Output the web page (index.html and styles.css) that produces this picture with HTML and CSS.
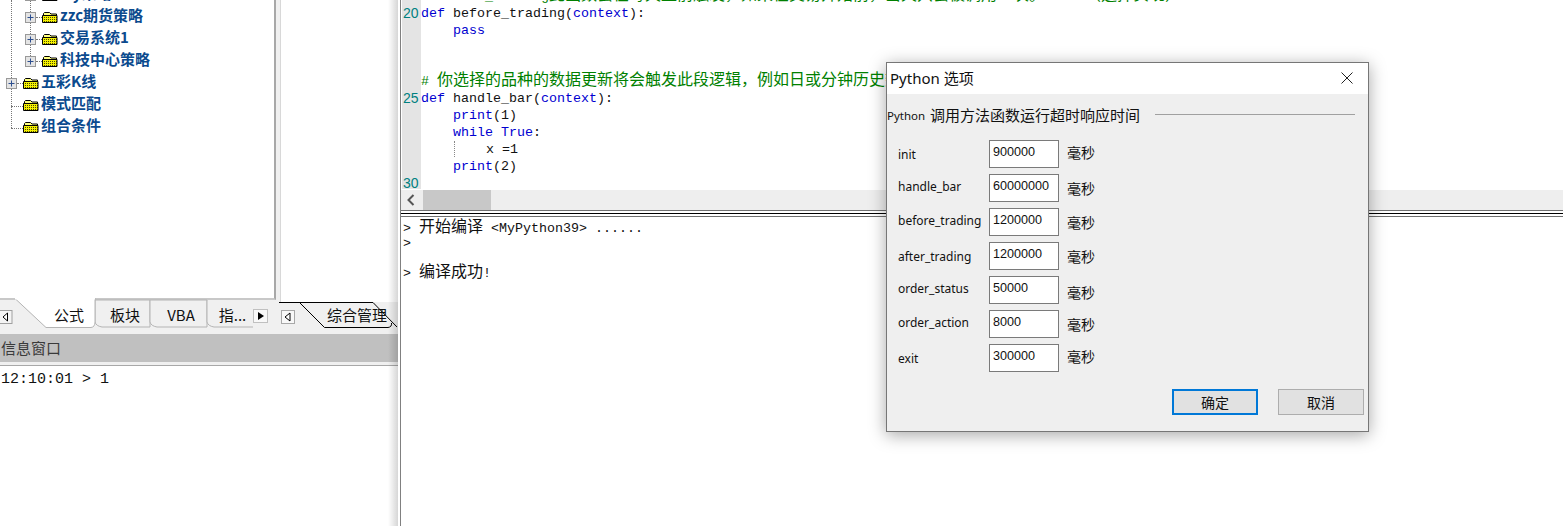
FILE: index.html
```html
<!DOCTYPE html>
<html lang="zh">
<head>
<meta charset="utf-8">
<title>Python 选项</title>
<link rel="stylesheet" href="styles.css">
</head>
<body>
<svg class="defs" width="0" height="0" aria-hidden="true">
  <defs>
    <pattern id="dither" width="2" height="2" patternUnits="userSpaceOnUse">
      <rect width="2" height="2" fill="#f4f000"/>
      <rect width="1" height="1" fill="#4a4a00"/>
    </pattern>
    <symbol id="folder" viewBox="0 0 16 12">
      <path d="M1.5 11.5V2.5L2.5 1.5H7.5L9 3H14.5V11.5Z" fill="#ffff80" stroke="#000"/>
      <rect x="1" y="5" width="14" height="6" fill="url(#dither)"/>
      <path d="M.5 11.5H15V4.5H.5Z" fill="none" stroke="#000"/>
    </symbol>
    <symbol id="plus" viewBox="0 0 11 11">
      <rect x=".5" y=".5" width="10" height="10" fill="#e4e4e4" stroke="#999"/>
      <path d="M2.5 5.5H8.5M5.5 2.5V8.5" stroke="#2d4f8f" fill="none"/>
    </symbol>
  </defs>
</svg>
<div class="app">
  <div class="left">
    <div class="panes">
      <div class="tree">
        <div class="vline-1"></div>
        <div class="vline-2"></div>
        <div class="node lvl2 node-first"><svg class="plus"><use href="#plus"/></svg><span class="dash"></span><svg class="folder"><use href="#folder"/></svg><span class="node-text">My策略</span></div>
        <div class="node lvl2"><svg class="plus"><use href="#plus"/></svg><span class="dash"></span><svg class="folder"><use href="#folder"/></svg><span class="node-text">zzc期货策略</span></div>
        <div class="node lvl2"><svg class="plus"><use href="#plus"/></svg><span class="dash"></span><svg class="folder"><use href="#folder"/></svg><span class="node-text">交易系统1</span></div>
        <div class="node lvl2"><svg class="plus"><use href="#plus"/></svg><span class="dash"></span><svg class="folder"><use href="#folder"/></svg><span class="node-text">科技中心策略</span></div>
        <div class="node lvl1"><svg class="plus"><use href="#plus"/></svg><span class="dash"></span><svg class="folder"><use href="#folder"/></svg><span class="node-text">五彩K线</span></div>
        <div class="node lvl1 leaf"><span class="dash"></span><svg class="folder"><use href="#folder"/></svg><span class="node-text">模式匹配</span></div>
        <div class="node lvl1 leaf"><span class="dash"></span><svg class="folder"><use href="#folder"/></svg><span class="node-text">组合条件</span></div>
      </div>
      <div class="pane2"></div>
    </div>
    <div class="tabstrip">
      <svg class="tabshapes" viewBox="0 298 398 36" width="398" height="36">
        <path d="M95 300V322Q96 326 102 327H150V300Z" fill="#f0f0f0" stroke="#b4b4b4"/>
        <path d="M150 300V322Q151 326 157 327H207V300Z" fill="#f0f0f0" stroke="#b4b4b4"/>
        <path d="M207 300V322Q208 326 214 327H253" fill="#f0f0f0" stroke="#b4b4b4"/>
        <path d="M15 298.5L46 327.5H91Q95 327 95 322V298" fill="#fff" stroke="#b4b4b4"/>
        <path d="M15 298.5H95" stroke="#fff" stroke-width="2" fill="none"/>
        <path d="M0 299.5H15" stroke="#c8c8c8" fill="none"/>
        <rect x="-1" y="310.5" width="13" height="13" fill="#f4f4f4" stroke="#a0a0a0"/>
        <path d="M7.5 313V321L3 317Z" fill="#fff" stroke="#000"/>
        <rect x="253.5" y="309.5" width="14" height="13" fill="#f8f8f8" stroke="#c0c0c0"/>
        <path d="M258 312V320L264 316Z" fill="#000"/>
        <rect x="281.5" y="310.5" width="13" height="13" fill="#f8f8f8" stroke="#a8a8a8"/>
        <path d="M290 313V321L285 317Z" fill="#fff" stroke="#000"/>
        <path d="M299.5 302.5L324.5 327.5H388Q392 327 391.5 323L373 302.5Z" fill="#f0f0f0"/>
        <path d="M279 302.5H373M299.5 302.5L324.5 327.5H388Q392 327 391.5 323M373 302.5L397 327" fill="none" stroke="#000"/>
      </svg>
      <span class="tab tab-on">公式</span>
      <span class="tab tab-a">板块</span>
      <span class="tab tab-b">VBA</span>
      <span class="tab tab-c">指...</span>
      <span class="tab tab-d">综合管理</span>
    </div>
    <div class="info-head">信息窗口</div>
    <div class="info-body">12:10:01 &gt; 1</div>
  </div>
  <div class="right">
    <div class="editor">
      <div class="gutter">
        <div class="ln"></div>
        <div class="ln">20</div>
        <div class="ln"></div>
        <div class="ln"></div>
        <div class="ln"></div>
        <div class="ln"></div>
        <div class="ln">25</div>
        <div class="ln"></div>
        <div class="ln"></div>
        <div class="ln"></div>
        <div class="ln"></div>
        <div class="ln">30</div>
      </div>
      <div class="code">
        <div class="cl cm"># before_trading<span class="zh">此函数会在每天盘前触发，如果在交易开始前，当天只会被调用一次。</span> --  <span class="zh">（选择实现）</span></div>
        <div class="cl"><span class="kw">def</span> before_trading(<span class="kw">context</span>):</div>
        <div class="cl">    <span class="kw">pass</span></div>
        <div class="cl"></div>
        <div class="cl"></div>
        <div class="cl cm"># <span class="zh">你选择的品种的数据更新将会触发此段逻辑，例如日或分钟历史数据切片或者是实时数据切片更新</span></div>
        <div class="cl"><span class="kw">def</span> handle_bar(<span class="kw">context</span>):</div>
        <div class="cl">    <span class="kw">print</span>(1)</div>
        <div class="cl">    <span class="kw">while True</span>:</div>
        <div class="cl">    <span class="guide"></span>    x =1</div>
        <div class="cl">    <span class="kw">print</span>(2)</div>
        <div class="cl"></div>
      </div>
    </div>
    <div class="hscroll">
      <svg class="hs-arrow" viewBox="0 0 8 12" width="8" height="12"><path d="M6.5 1L1.5 6L6.5 11" fill="none" stroke="#555" stroke-width="2"/></svg>
      <div class="hs-thumb"></div>
    </div>
    <div class="sash"></div>
    <div class="output">
      <div class="ol">&gt; <span class="zh">开始编译</span> &lt;MyPython39&gt; ......</div>
      <div class="ol">&gt;</div>
      <div class="ol"></div>
      <div class="ol">&gt; <span class="zh">编译成功</span>!</div>
    </div>
  </div>
  <div class="dialog">
    <div class="dlg-title">
      <span>Python 选项</span>
      <svg class="dlg-close" viewBox="0 0 12 12" width="12" height="12"><path d="M.5 .5L11.5 11.5M11.5 .5L.5 11.5" stroke="#222" fill="none"/></svg>
    </div>
    <div class="dlg-body">
      <div class="group">
        <span class="group-py">Python</span><span class="group-zh">调用方法函数运行超时响应时间</span><span class="group-line"></span>
      </div>
      <div class="rows">
        <div class="row"><span class="lab lab-low">init</span><div class="field">900000</div><span class="unit unit-hi">毫秒</span></div>
        <div class="row"><span class="lab">handle_bar</span><div class="field">60000000</div><span class="unit">毫秒</span></div>
        <div class="row"><span class="lab">before_trading</span><div class="field">1200000</div><span class="unit">毫秒</span></div>
        <div class="row"><span class="lab lab-low">after_trading</span><div class="field">1200000</div><span class="unit">毫秒</span></div>
        <div class="row"><span class="lab">order_status</span><div class="field">50000</div><span class="unit unit-lo">毫秒</span></div>
        <div class="row"><span class="lab">order_action</span><div class="field">8000</div><span class="unit">毫秒</span></div>
        <div class="row"><span class="lab lab-low">exit</span><div class="field">300000</div><span class="unit unit-hi">毫秒</span></div>
      </div>
      <div class="buttons">
        <div class="btn btn-default">确定</div>
        <div class="btn">取消</div>
      </div>
    </div>
  </div>
</div>
</body>
</html>
```
FILE: styles.css
```css
* { box-sizing: border-box; }
html, body { margin: 0; padding: 0; background: #fff; }
body { width: 1563px; height: 526px; overflow: hidden; }
.defs { position: absolute; }
.zh { font-family: "Noto Sans CJK SC", sans-serif; font-size: 16px; line-height: 0; }

.app {
  position: relative;
  display: flex;
  width: 1563px;
  height: 526px;
  overflow: hidden;
  background: #fff;
}

/* Left column */
.left {
  position: relative;
  display: flex;
  flex-direction: column;
  flex: none;
  width: 398px;
  background: #f0f0f0;
}
.left::after {
  content: "";
  position: absolute;
  top: 0;
  right: 0;
  bottom: 0;
  width: 10px;
  background: linear-gradient(to right, rgba(0,0,0,0), rgba(0,0,0,.16));
}
.panes { display: flex; align-items: flex-start; height: 302px; flex: none; }
.tree {
  position: relative;
  flex: none;
  width: 276px;
  height: 300px;
  background: #fff;
  border-right: 2px solid #a8a8a8;
  border-bottom: 2px solid #c8c8c8;
  overflow: hidden;
  font-family: "Noto Sans CJK SC", sans-serif;
}
.vline-1 {
  position: absolute;
  left: 11px;
  top: 0;
  height: 128px;
  border-left: 1px dotted #777;
}
.vline-2 {
  position: absolute;
  left: 30px;
  top: 0;
  height: 60px;
  border-left: 1px dotted #777;
}
.node {
  position: relative;
  display: flex;
  align-items: center;
  height: 22px;
}
.node-first { margin-top: -17px; }
.lvl1 { padding-left: 6px; }
.lvl2 { padding-left: 25px; }
.leaf { padding-left: 11px; }
.plus { flex: none; width: 11px; height: 11px; margin-top: 2px; }
.dash {
  flex: none;
  width: 6px;
  height: 1px;
  margin-top: 2px;
  border-top: 1px dotted #777;
}
.leaf .dash { width: 12px; margin-top: 4px; }
.folder { flex: none; width: 16px; height: 12px; margin-top: 2px; }
.node-text {
  margin-left: 2px;
  margin-top: -2px;
  font-size: 15px;
  font-weight: 700;
  line-height: 22px;
  color: #0b4a8e;
  white-space: nowrap;
}
.pane2 {
  flex: none;
  align-self: stretch;
  width: 118px;
  margin-left: 4px;
  background: #fff;
  border-left: 1px solid #d8d8d8;
}

.tabstrip {
  position: relative;
  display: flex;
  align-items: flex-start;
  flex: none;
  height: 32px;
  padding-top: 3px;
  font-family: "Noto Sans CJK SC", sans-serif;
  font-size: 15px;
  line-height: 20px;
  color: #111;
}
.tabshapes { position: absolute; left: 0; top: -4px; overflow: visible; }
.tab { position: relative; white-space: nowrap; text-align: center; }
.tab-on { margin-left: 45px; width: 48px; }
.tab-a { margin-left: 2px; width: 55px; padding-left: 5px; }
.tab-b { width: 57px; padding-left: 5px; }
.tab-c { width: 46px; padding-left: 5px; }
.tab-d { margin-left: 74px; }

.info-head {
  flex: none;
  height: 28px;
  padding-left: 1px;
  background: #c0c0c0;
  font-family: "Noto Sans CJK SC", sans-serif;
  font-size: 15px;
  line-height: 28px;
  color: #3a3a3a;
}
.info-body {
  flex: 1;
  margin-top: 3px;
  padding: 4px 0 0 1px;
  background: #fff;
  border-top: 1px solid #a8a8a8;
  font-family: "Liberation Mono", monospace;
  font-size: 15px;
  line-height: 20px;
  color: #111;
  white-space: pre;
}

/* Right column */
.right {
  display: flex;
  flex-direction: column;
  flex: none;
  width: 1163px;
  margin-left: 2px;
  border-left: 1px solid #808080;
}
.editor { display: flex; flex: none; height: 190px; overflow: hidden; padding-left: 1px; }
.gutter {
  flex: none;
  width: 19px;
  height: 201px;
  margin-top: -12px;
  padding-left: 1px;
  background: #e4e4e4;
  font-family: "Liberation Sans", sans-serif;
  font-size: 14px;
  color: #008080;
}
.ln { height: 17px; line-height: 17px; }
.code {
  flex: 1;
  margin-top: -12px;
  font-family: "Liberation Mono", monospace;
  font-size: 13.33px;
  color: #111;
}
.cl { height: 17px; line-height: 17px; white-space: pre; }
.cm { color: #008000; }
.kw { color: #0000d0; }
.guide {
  display: inline-block;
  width: 0;
  height: 16px;
  margin-left: 1px;
  margin-right: -1px;
  vertical-align: top;
  border-left: 1px dotted #888;
}

.hscroll {
  display: flex;
  align-items: stretch;
  flex: none;
  height: 20px;
  background: #eeeeee;
}
.hs-arrow { flex: none; align-self: center; margin: 0 8px 0 6px; }
.hs-thumb { flex: none; width: 68px; background: #c8c8c8; }
.sash {
  flex: none;
  height: 7px;
  background: #fff;
  border-top: 1px solid #707070;
  border-bottom: 1px solid #707070;
}
.sash::after {
  content: "";
  display: block;
  margin-top: 2px;
  height: 1px;
  background: #000;
}
.output {
  flex: 1;
  padding: 4px 0 0 2px;
  font-family: "Liberation Mono", monospace;
  font-size: 13.33px;
  color: #111;
}
.ol { height: 15px; line-height: 15px; white-space: pre; }

/* Dialog */
.dialog {
  position: absolute;
  left: 886px;
  top: 62px;
  width: 483px;
  height: 370px;
  display: flex;
  flex-direction: column;
  background: #efefef;
  border: 1px solid #767676;
  box-shadow: 0 3px 16px rgba(0,0,0,.35);
  font-family: "Noto Sans", "Noto Sans CJK SC", sans-serif;
  color: #111;
}
.dlg-title {
  display: flex;
  align-items: center;
  justify-content: space-between;
  flex: none;
  height: 31px;
  padding: 0 15px 2px 3px;
  background: #fff;
  font-size: 15px;
}
.dlg-body { display: flex; flex-direction: column; flex: 1; }
.group { display: flex; align-items: center; height: 20px; margin-top: 10px; margin-bottom: 1px; }
.group-py { flex: none; width: 43px; padding-top: 3px; font-size: 11.5px; }
.group-zh { flex: none; font-family: "Noto Sans CJK SC", sans-serif; font-size: 15px; }
.group-line { flex: none; width: 200px; height: 1px; margin-left: 15px; background: #a0a0a0; }
.rows { display: flex; flex-direction: column; gap: 6px; margin-top: 15px; padding-left: 11px; }
.row { display: flex; align-items: flex-start; height: 28px; }
.lab { flex: none; width: 91px; padding-top: 5px; font-size: 12px; line-height: 16px; }
.lab-low { padding-top: 7px; }
.field {
  flex: none;
  width: 70px;
  height: 28px;
  padding: 3px 0 0 3px;
  background: #fff;
  border: 1px solid #7a7a7a;
  font-family: "Liberation Sans", sans-serif;
  font-size: 12.6px;
  line-height: 17px;
}
.unit {
  flex: none;
  margin-left: 8px;
  padding-top: 4px;
  font-family: "Noto Sans CJK SC", sans-serif;
  font-size: 14px;
  line-height: 20px;
}
.unit-hi { padding-top: 2px; }
.unit-lo { padding-top: 6px; }
.buttons { display: flex; justify-content: flex-end; gap: 20px; margin-top: 17px; padding-right: 4px; }
.btn {
  width: 86px;
  height: 26px;
  background: #e1e1e1;
  border: 1px solid #adadad;
  font-family: "Noto Sans CJK SC", sans-serif;
  font-size: 14px;
  line-height: 24px;
  text-align: center;
}
.btn-default { border: 2px solid #0078d7; line-height: 22px; }
.dlg-close { flex: none; }
```
